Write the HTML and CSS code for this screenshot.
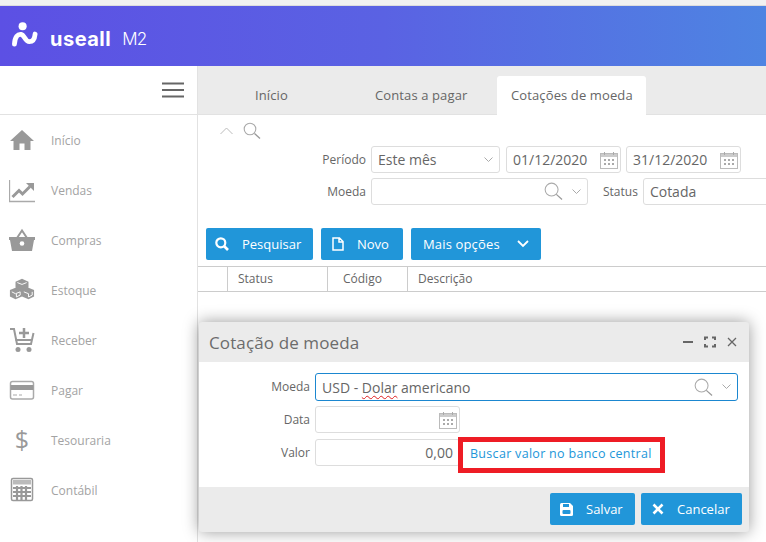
FILE: index.html
```html
<!doctype html>
<html>
<head>
	<title>Cotações de moeda</title>
	<link rel="stylesheet" href="styles.css">
</head>
<body>
	<div class="topstrip"></div>
	<header class="topbar">
		<svg class="logo-mark" viewBox="0 0 28 26"><circle cx="11" cy="4.500" r="4.200" fill="#fff"/><path d="M2.500 23 C3 15 6 12.500 9.500 13 C13 13.500 13.500 20.500 18 20.500 C21.500 20.500 23.500 18 24 12.500" fill="none" stroke="#fff" stroke-width="5" stroke-linecap="round"/></svg>
		<span class="logo-name">useall</span>
		<span class="logo-product">M2</span>
	</header>
	<div class="app">
		<aside class="sidebar">
			<div class="menu-toggle">
				<svg width="22" height="16" viewBox="0 0 22 16"><path d="M0 1.500H22M0 8H22M0 14.500H22" stroke="#666" stroke-width="2"/></svg>
			</div>
			<nav class="nav">
				<a class="nav-item"><svg class="nav-icon" viewBox="0 0 26 26"><path d="M13 3 L25 14 H21.500 V23 H15.500 V16.500 H10.500 V23 H4.500 V14 H1 Z" fill="#999"/></svg>Início</a>
				<a class="nav-item"><svg class="nav-icon" viewBox="0 0 26 26"><path d="M0.500 3 V24.500 H26" fill="none" stroke="#aaa" stroke-width="1.300"/><path d="M3.500 20 L10 13.500 L13.500 17 L21 9.500" fill="none" stroke="#999" stroke-width="3"/><path d="M17 6 H25 V14 Z" fill="#999"/></svg>Vendas</a>
				<a class="nav-item"><svg class="nav-icon" viewBox="0 0 26 26"><path d="M8 11 L13 3.500 L18 11" fill="none" stroke="#999" stroke-width="2"/><path d="M0 10 H26 V13 H25 L23 24 H3 L1 13 H0 Z" fill="#999"/><circle cx="13" cy="16.500" r="2.300" fill="#fff"/></svg>Compras</a>
				<a class="nav-item"><svg class="nav-icon" viewBox="0 0 28 26"><path d="M14 1 L21 4 V11 L14 14 L7 11 V4 Z M1 13 L7 10.500 L14 13.500 L21 10.500 L27 13 V20 L21 23 L14 20 L7 23 L1 20 Z" fill="#999"/><path d="M9 5 L14 7 L19 5 M3 15 L7 17 L12 15 V18.500 L8 20.500 V17 M16 15 L21 17 V20.500 L25 18.500 V15" fill="none" stroke="#fff" stroke-width="1"/></svg>Estoque</a>
				<a class="nav-item"><svg class="nav-icon" viewBox="0 0 26 26"><path d="M1 2 H5 L8 17 H22 L24.500 6" fill="none" stroke="#999" stroke-width="2"/><path d="M6.500 13 H23" stroke="#999" stroke-width="2"/><path d="M15 1 V11 M10 6 H20" stroke="#999" stroke-width="2.500"/><circle cx="9" cy="22.500" r="2.500" fill="#999"/><circle cx="20" cy="22.500" r="2.500" fill="#999"/></svg>Receber</a>
				<a class="nav-item"><svg class="nav-icon" viewBox="0 0 26 26"><rect x="1.500" y="4.500" width="23" height="17.500" rx="2" fill="#fff" stroke="#aaa" stroke-width="1.500"/><rect x="1.500" y="8" width="23" height="5" fill="#999"/><path d="M4 18H8M10 18H13" stroke="#aaa" stroke-width="1.200"/></svg>Pagar</a>
				<a class="nav-item"><span class="nav-icon nav-dollar">$</span>Tesouraria</a>
				<a class="nav-item"><svg class="nav-icon" viewBox="0 0 26 26"><rect x="2.500" y="1.500" width="21" height="22" rx="1.500" fill="#fff" stroke="#999" stroke-width="1.500"/><rect x="4" y="3" width="18" height="4.500" fill="#bbb"/><path d="M4 11H22M4 15H22M4 19H22M8 9V23M12.500 9V23M17 9V23" stroke="#999" stroke-width="2.200"/></svg>Contábil</a>
			</nav>
		</aside>
		<main class="content">
			<div class="tabs">
				<div class="tab tab-inicio">Início</div>
				<div class="tab tab-contas">Contas a pagar</div>
				<div class="tab tab-active">Cotações de moeda</div>
			</div>
			<div class="filter-toggle">
				<svg width="13" height="8" viewBox="0 0 13 8"><path d="M0.500 7 L6.500 1 L12.500 7" fill="none" stroke="#bbb"/></svg>
				<svg width="18" height="18" viewBox="0 0 18 18"><circle cx="7" cy="7" r="5.800" fill="none" stroke="#aaa" stroke-width="1.100"/><path d="M11.500 11.500 L17 16.500" stroke="#999" stroke-width="1.300"/></svg>
			</div>
			<div class="filters">
				<div class="filter-row">
					<label class="filter-label">Período</label>
					<div class="field field-periodo"><span>Este mês</span><svg class="chev" width="9" height="6" viewBox="0 0 9 6"><path d="M0.500 0.500 L4.500 4.500 L8.500 0.500" fill="none" stroke="#aaa"/></svg></div>
					<div class="field field-date"><span>01/12/2020</span><svg class="cal" width="18" height="18" viewBox="0 0 18 18"><use href="#cal-icon"/></svg></div>
					<div class="field field-date"><span>31/12/2020</span><svg class="cal" width="18" height="18" viewBox="0 0 18 18"><use href="#cal-icon"/></svg></div>
				</div>
				<div class="filter-row">
					<label class="filter-label">Moeda</label>
					<div class="field field-moeda"><svg class="lens" width="19" height="19" viewBox="0 0 20 20"><use href="#lens-icon"/></svg><svg class="chev" width="9" height="6" viewBox="0 0 9 6"><path d="M0.500 0.500 L4.500 4.500 L8.500 0.500" fill="none" stroke="#aaa"/></svg></div>
					<label class="filter-label filter-label-status">Status</label>
					<div class="field field-status"><span>Cotada</span></div>
				</div>
			</div>
			<div class="actions">
				<button class="btn btn-pesquisar"><svg width="14" height="14" viewBox="0 0 14 14"><circle cx="5.800" cy="5.800" r="4.500" fill="none" stroke="#fff" stroke-width="2.200"/><path d="M9 9 L13 13" stroke="#fff" stroke-width="2.600"/></svg>Pesquisar</button>
				<button class="btn btn-novo"><svg width="12" height="14" viewBox="0 0 12 14"><path d="M1 1 H7.500 L11 4.500 V13 H1 Z M7 1 V5 H11" fill="none" stroke="#fff" stroke-width="1.500"/></svg>Novo</button>
				<button class="btn btn-mais">Mais opções<svg width="12" height="8" viewBox="0 0 12 8"><path d="M1 1 L6 6 L11 1" fill="none" stroke="#fff" stroke-width="1.800"/></svg></button>
			</div>
			<div class="grid-head">
				<div class="col col-check"></div>
				<div class="col col-status">Status</div>
				<div class="col col-codigo">Código</div>
				<div class="col col-desc">Descrição</div>
			</div>
		</main>
	</div>

	<!-- janela -->
	<div class="modal">
		<div class="modal-title">
			<span class="modal-name">Cotação de moeda</span>
			<svg width="60" height="12" viewBox="0 0 60 12"><path d="M0 6H10" stroke="#666" stroke-width="2"/><path d="M22 4V1.500H25M29 1.500H32V4M32 8V10.500H29M25 10.500H22V8" fill="none" stroke="#666" stroke-width="2"/><path d="M45 2 L53 10 M53 2 L45 10" stroke="#666" stroke-width="1.300"/></svg>
		</div>
		<div class="modal-body">
			<div class="modal-row">
				<label class="modal-label">Moeda</label>
				<div class="field field-focus"><span>USD - <span class="spell">Dolar</span> americano</span><svg class="lens" width="19" height="19" viewBox="0 0 20 20"><use href="#lens-icon"/></svg><svg class="chev" width="9" height="6" viewBox="0 0 9 6"><path d="M0.500 0.500 L4.500 4.500 L8.500 0.500" fill="none" stroke="#aaa"/></svg></div>
			</div>
			<div class="modal-row">
				<label class="modal-label">Data</label>
				<div class="field field-small"><svg class="cal" width="18" height="18" viewBox="0 0 18 18"><use href="#cal-icon"/></svg></div>
			</div>
			<div class="modal-row">
				<label class="modal-label">Valor</label>
				<div class="field field-small field-valor"><span>0,00</span></div>
				<div class="highlight"><a class="bc-link">Buscar valor no banco central</a></div>
			</div>
		</div>
		<div class="modal-foot">
			<button class="btn btn-salvar"><svg width="13" height="13" viewBox="0 0 13 13"><path d="M0 1.500 Q0 0 1.500 0 H10 L13 3 V11.500 Q13 13 11.500 13 H1.500 Q0 13 0 11.500 Z" fill="#fff"/><rect x="3" y="1" width="6" height="3" fill="#2196d9"/><rect x="2.500" y="7" width="8" height="4" rx="1" fill="#2196d9"/></svg>Salvar</button>
			<button class="btn btn-cancelar"><svg width="12" height="12" viewBox="0 0 12 12"><path d="M1.500 1.500 L10.500 10.500 M10.500 1.500 L1.500 10.500" stroke="#fff" stroke-width="2.600"/></svg>Cancelar</button>
		</div>
	</div>

	<svg class="defs" width="0" height="0">
		<defs>
			<g id="cal-icon">
				<rect x="0.500" y="2.500" width="17" height="15" fill="#fff" stroke="#bbb"/>
				<rect x="1" y="3" width="16" height="3" fill="#ccc"/>
				<path d="M4.500 1V4M13.500 1V4" stroke="#aaa"/>
				<path d="M4 9H6M8 9H10M12 9H14M4 13H6M8 13H10M12 13H14" stroke="#aaa" stroke-width="2"/>
			</g>
			<g id="lens-icon">
				<circle cx="8" cy="8" r="6.800" fill="none" stroke="#aaa" stroke-width="1.100"/>
				<path d="M13 13 L19 18.500" stroke="#999" stroke-width="1.300"/>
			</g>
		</defs>
	</svg>
</body>
</html>
```

FILE: styles.css
```css
html, body {margin: 0; padding: 0; height: 100%; overflow: hidden;}
body {font-family: "Open Sans", Arial, sans-serif; font-size: 12px; color: #666; background: #fff;}
button {font-family: inherit;}
.defs {display: block;}

.topstrip {height: 5px; background: #f1f1f1; border-bottom: 1px solid #ddd;}
.topbar {height: 60px; display: flex; align-items: center; padding-left: 12px; box-sizing: border-box; background: linear-gradient(90deg, #5c50e4 0%, #5a62e3 50%, #4e84e2 100%); color: #fff;}
.logo-mark {width: 27px; height: 25px; margin-top: -3px;}
.logo-name {font-family: "Inter", sans-serif; font-weight: 700; font-size: 20px; letter-spacing: 0.5px; margin-left: 11px; margin-top: 6px;}
.logo-product {font-family: "Inter", sans-serif; font-weight: 300; font-size: 17px; letter-spacing: -0.8px; margin-left: 11px; margin-top: 6px;}

.app {display: flex; height: 476px;}
.sidebar {width: 198px; flex: none; box-sizing: border-box; border-right: 1px solid #e2e2e2; background: #fff;}
.menu-toggle {height: 49px; box-sizing: border-box; border-bottom: 1px solid #e2e2e2; display: flex; justify-content: flex-end; align-items: center; padding: 0 13px 0 0;}
.nav-item {height: 50px; display: flex; align-items: center; color: #a3a3a3; font-size: 12px;}
.nav-icon {width: 26px; height: 26px; margin: 0 16px 0 9px; flex: none;}
.nav-dollar {font-size: 25px; line-height: 24px; text-align: center; color: #999;}

.content {flex: 1; min-width: 0; overflow: hidden;}
.tabs {height: 49px; box-sizing: border-box; background: #ebebeb; border-bottom: 1px solid #e2e2e2; display: flex; align-items: flex-end; font-size: 13px; letter-spacing: 0.12px;}
.tab {height: 38px; line-height: 39px; flex: none;}
.tab-inicio {margin-left: 57px;}
.tab-contas {margin-left: 87px;}
.tab-active {margin-left: 30px; width: 149px; height: 39px; margin-bottom: -1px; text-align: center; background: #fff; border-radius: 3px 3px 0 0;}

.filter-toggle {display: flex; align-items: center; gap: 10px; height: 31px; padding-left: 22px;}
.filters {display: flex; flex-direction: column; gap: 5px;}
.filter-row {display: flex; align-items: center; height: 27px;}
.filter-label {width: 173px; text-align: right; padding-right: 5px; box-sizing: border-box; flex: none;}
.filter-label-status {width: auto; margin-left: 15px;}
.field {height: 27px; box-sizing: border-box; border: 1px solid #ddd; border-radius: 3px; font-size: 14px; line-height: 25px; padding: 0 6px; background: #fff; display: flex; align-items: center; flex: none; white-space: nowrap;}
.field-periodo {width: 129px;}
.field-date {width: 115px; margin-left: 6px;}
.field-date + .field-date {margin-left: 5px;}
.field-moeda {width: 217px; justify-content: flex-end;}
.field-status {width: 150px;}
.chev {margin-left: auto; flex: none;}
.lens {margin-left: auto; flex: none;}
.lens + .chev {margin-left: 9px;}
.cal {margin-left: auto; flex: none; margin-right: -4px;}

.actions {display: flex; gap: 8px; margin: 23px 0 0 8px;}
.btn {height: 32px; border: 0; border-radius: 2px; background: #2196d9; color: #fff; font-size: 13px; display: flex; align-items: center; padding: 0; flex: none;}
.btn-pesquisar {width: 107px; padding-left: 9px;}
.btn-pesquisar svg {margin-right: 13px;}
.btn-novo {width: 82px; padding-left: 11px;}
.btn-novo svg {margin-right: 13px;}
.btn-mais {width: 130px; padding-left: 12px; letter-spacing: 0.15px;}
.btn-mais svg {margin-left: 17px;}

.grid-head {display: flex; height: 26px; box-sizing: border-box; margin-top: 6px; border-top: 1px solid #ccc; border-bottom: 1px solid #ccc;}
.col {border-right: 1px solid #ccc; line-height: 24px; box-sizing: border-box; flex: none;}
.col-check {width: 30px;}
.col-status {width: 100px; padding-left: 10px;}
.col-codigo {width: 80px; padding-left: 15px;}
.col-desc {border-right: 0; padding-left: 10px;}

.modal {position: absolute; left: 199px; top: 322px; width: 550px; height: 210px; border-radius: 3px; background: #ebebeb; box-shadow: 0 0 16px rgba(0, 0, 0, 0.4); display: flex; flex-direction: column;}
.modal-title {height: 40px; display: flex; align-items: center; justify-content: space-between; padding: 0 6px 0 10px;}
.modal-name {font-size: 17px; color: #6c6c6c; letter-spacing: 0.12px;}
.modal-body {height: 125px; box-sizing: border-box; background: #fff; padding-top: 11px; display: flex; flex-direction: column; gap: 5px;}
.modal-row {display: flex; align-items: flex-start; height: 28px;}
.modal-label {width: 116px; padding: 0 5px 0 0; box-sizing: border-box; text-align: right; line-height: 28px; flex: none;}
.field-focus {width: 423px; height: 28px; border-color: #1b87d0; color: #666;}
.field-small {width: 145px;}
.field-valor {justify-content: flex-end; height: 27px;}
.spell {text-decoration: underline wavy #e02020 1px; text-underline-offset: 2px;}
.highlight {width: 207px; height: 36px; box-sizing: border-box; border: 5px solid #ee1c25; margin: -2px 0 0 -2px; padding-left: 7px; line-height: 24px; background: #fff; flex: none; position: relative;}
.bc-link {color: #2196d9; font-size: 12.500px; letter-spacing: 0.3px; white-space: nowrap;}
.modal-foot {flex: 1; display: flex; justify-content: flex-end; align-items: flex-start; gap: 6px; padding: 6px 7px 0 0;}
.btn-salvar {width: 85px; padding-left: 10px;}
.btn-salvar svg {margin-right: 13px;}
.btn-cancelar {width: 101px; padding-left: 11px;}
.btn-cancelar svg {margin-right: 13px;}
```
